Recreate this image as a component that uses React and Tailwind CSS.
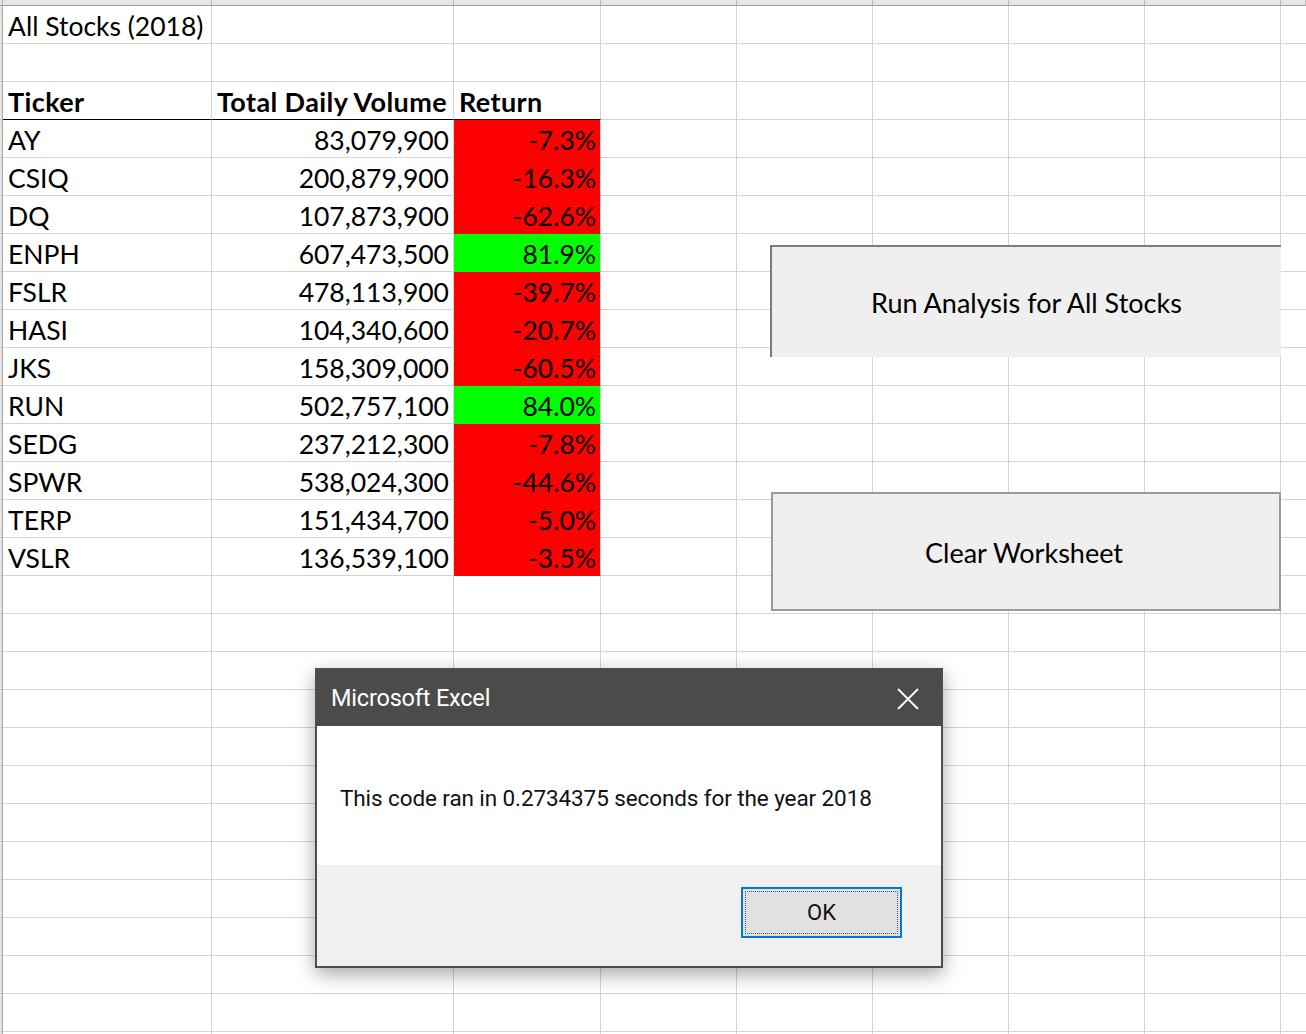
const stocks = [
  ["AY", "83,079,900", "-7.3%", false],
  ["CSIQ", "200,879,900", "-16.3%", false],
  ["DQ", "107,873,900", "-62.6%", false],
  ["ENPH", "607,473,500", "81.9%", true],
  ["FSLR", "478,113,900", "-39.7%", false],
  ["HASI", "104,340,600", "-20.7%", false],
  ["JKS", "158,309,000", "-60.5%", false],
  ["RUN", "502,757,100", "84.0%", true],
  ["SEDG", "237,212,300", "-7.8%", false],
  ["SPWR", "538,024,300", "-44.6%", false],
  ["TERP", "151,434,700", "-5.0%", false],
  ["VSLR", "136,539,100", "-3.5%", false],
];

const cols =
  "grid grid-cols-[3px_209px_242px_147px_136px_136px_136px_136px_136px_1fr]";

const Cell = ({ children, className = "" }) => (
  <div
    className={`h-[38px] leading-[40px] border-r border-b border-[#d4d4d4] whitespace-nowrap overflow-visible ${className}`}
  >
    {children}
  </div>
);

const Row = ({ a, b, c, header, fill }) => (
  <div className={cols}>
    <div className="h-[38px] bg-[#e6e6e6] border-r border-[#a3a3a3] border-b border-b-[#c8c8c8]" />
    <Cell
      className={`pl-[5px] ${header ? "text-[27px] font-bold tracking-[0.4px] border-b-black" : "text-[26.5px]"}`}
    >
      {a}
    </Cell>
    <Cell
      className={`pr-[4px] ${header ? "pl-[5px] text-[27px] font-bold tracking-[0.4px] border-b-black" : "text-right text-[26.5px]"}`}
    >
      {b}
    </Cell>
    <Cell
      className={`${header ? "pl-[5px] text-[27px] font-bold tracking-[0.4px] border-b-black" : "text-right text-[26.5px] pr-[4px]"} ${
        fill === "red"
          ? "bg-[#ff0000] border-b-[#ff0000]"
          : fill === "green"
            ? "bg-[#00ff00] border-b-[#00ff00]"
            : ""
      }`}
    >
      {c}
    </Cell>
    <Cell />
    <Cell />
    <Cell />
    <Cell />
    <Cell />
    <Cell className="border-r-0" />
  </div>
);

export default function App() {
  const blanks = Array.from({ length: 13 });

  return (
    <div className="relative w-[1306px] h-[1034px] overflow-hidden bg-white text-black font-['Lato',sans-serif]">
      {/* column header strip */}
      <div className={cols}>
        {Array.from({ length: 10 }).map((_, i) => (
          <div
            key={i}
            className="h-[6px] bg-[#e6e6e6] border-b border-[#9d9d9d] border-r border-r-[#b5b5b5]"
          />
        ))}
      </div>

      <Row a="All Stocks (2018)" />
      <Row />
      <Row a="Ticker" b="Total Daily Volume" c="Return" header />
      {stocks.map(([t, v, r, up]) => (
        <Row key={t} a={t} b={v} c={r} fill={up ? "green" : "red"} />
      ))}
      {blanks.map((_, i) => (
        <Row key={i} />
      ))}

      {/* macro buttons */}
      <div className="absolute left-[770px] top-[245px] w-[511px] h-[112px] bg-[#efefef] border-t-2 border-l-2 border-[#7b7b7b] flex items-center justify-center">
        <span className="text-[27px] pt-[2px]">Run Analysis for All Stocks</span>
      </div>
      <div className="absolute left-[771px] top-[492px] w-[510px] h-[119px] bg-[#efefef] border-2 border-[#9a9a9a] flex items-center justify-center">
        <span className="text-[27px] pt-[4px] -translate-x-[2px]">Clear Worksheet</span>
      </div>

      {/* message box */}
      <div className="absolute left-[315px] top-[668px] w-[628px] h-[300px] border-2 border-[#4f4d4b] bg-[#f0f0f0] shadow-[0_6px_18px_rgba(0,0,0,0.35)] flex flex-col font-['Roboto',sans-serif]">
        <div className="h-[56px] bg-[#4d4b49] flex items-center justify-between pl-[14px] pr-[22px]">
          <span className="text-white text-[23.5px] tracking-[-0.2px] pt-[2px]">Microsoft Excel</span>
          <svg width="22" height="22" viewBox="0 0 22 22" className="mt-[1px]">
            <path d="M1 1L21 21M21 1L1 21" stroke="#fff" strokeWidth="1.8" fill="none" />
          </svg>
        </div>
        <div className="h-[139px] bg-white flex items-center pl-[23px] pt-[6px]">
          <span className="text-[22.5px] text-[#111] tracking-[-0.1px]">
            This code ran in 0.2734375 seconds for the year 2018
          </span>
        </div>
        <div className="flex-1 flex justify-end items-start pt-[22px] pr-[39px]">
          <div className="w-[161px] h-[51px] border-2 border-[#0078d7] bg-[#e1e1e1] p-[2px]">
            <div className="w-full h-full border border-dotted border-[#555] flex items-center justify-center text-[22px] text-[#111]">
              OK
            </div>
          </div>
        </div>
      </div>
    </div>
  );
}
